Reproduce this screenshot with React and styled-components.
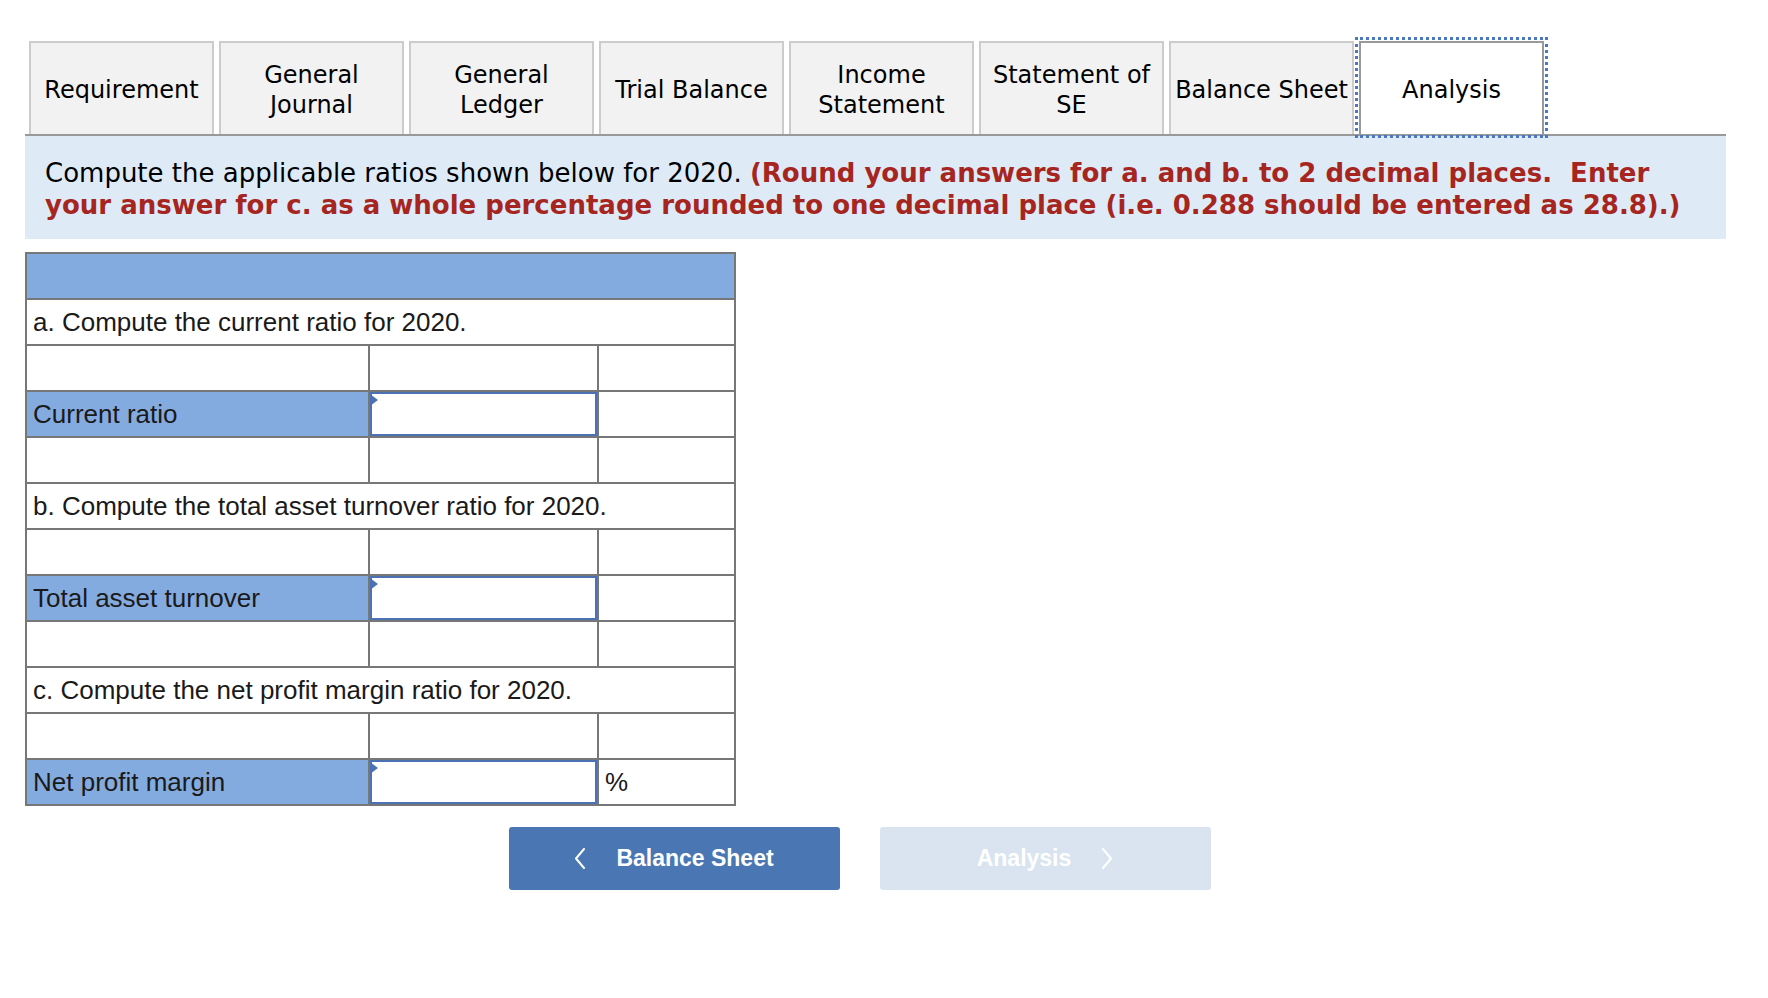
import React from "react";
import styled, { createGlobalStyle } from "styled-components";

const tabs = [
  "Requirement",
  "General\nJournal",
  "General\nLedger",
  "Trial Balance",
  "Income\nStatement",
  "Statement of\nSE",
  "Balance Sheet",
  "Analysis",
];

const sections = [
  { prompt: "a. Compute the current ratio for 2020.", label: "Current ratio", unit: "" },
  { prompt: "b. Compute the total asset turnover ratio for 2020.", label: "Total asset turnover", unit: "" },
  { prompt: "c. Compute the net profit margin ratio for 2020.", label: "Net profit margin", unit: "%" },
];

const Chevron = ({ dir }) => (
  <svg width="12" height="21" viewBox="0 0 12 21" fill="none">
    <polyline
      points={dir === "left" ? "10,1 2,10.5 10,20" : "2,1 10,10.5 2,20"}
      stroke="#fff"
      strokeWidth="2"
      strokeLinecap="round"
      strokeLinejoin="round"
    />
  </svg>
);

export default function App() {
  return (
    <>
      <GlobalStyle />
      <Page>
        <TabBar>
          {tabs.map((t) => (
            <Tab key={t} active={t === "Analysis"}>
              {t}
            </Tab>
          ))}
        </TabBar>
        <Banner>
          Compute the applicable ratios shown below for 2020.{" "}
          <Warn>
            (Round your answers for a. and b. to 2 decimal places.&nbsp; Enter your answer for c. as a
            whole percentage rounded to one decimal place (i.e. 0.288 should be entered as 28.8).)
          </Warn>
        </Banner>
        <Table>
          <colgroup>
            <col style={{ width: 343 }} />
            <col style={{ width: 229 }} />
            <col style={{ width: 137 }} />
          </colgroup>
          <tbody>
            <tr>
              <HeadCell colSpan={3} />
            </tr>
            {sections.map((s, i) => (
              <React.Fragment key={s.label}>
                <tr>
                  <Cell colSpan={3}>{s.prompt}</Cell>
                </tr>
                <tr>
                  <Cell />
                  <Cell />
                  <Cell />
                </tr>
                <tr>
                  <LabelCell>{s.label}</LabelCell>
                  <InputCell>
                    <InputWrap>
                      <Entry type="text" aria-label={s.label} />
                    </InputWrap>
                  </InputCell>
                  <Cell>{s.unit}</Cell>
                </tr>
                {i < sections.length - 1 && (
                  <tr>
                    <Cell />
                    <Cell />
                    <Cell />
                  </tr>
                )}
              </React.Fragment>
            ))}
          </tbody>
        </Table>
        <Nav>
          <NavButton>
            <Chevron dir="left" />
            Balance Sheet
          </NavButton>
          <NavButton disabled>
            Analysis
            <Chevron dir="right" />
          </NavButton>
        </Nav>
      </Page>
    </>
  );
}

const GlobalStyle = createGlobalStyle`
  body {
    margin: 0;
    background: #fff;
    font-family: "DejaVu Sans", Verdana, sans-serif;
  }
`;

const Page = styled.div`
  width: 1701px;
  padding: 41px 0 0 25px;
`;

const TabBar = styled.div`
  display: flex;
  gap: 5px;
  padding-left: 4px;
  border-bottom: 2px solid #999;
`;

const Tab = styled.div`
  box-sizing: border-box;
  width: 185px;
  height: 93px;
  padding-top: 3px;
  display: flex;
  align-items: center;
  justify-content: center;
  text-align: center;
  white-space: pre-line;
  font-size: 24px;
  line-height: 30px;
  color: #000;
  background: ${(p) => (p.active ? "#fff" : "#f2f2f2")};
  border: 2px solid ${(p) => (p.active ? "#999" : "#ccc")};
  border-bottom: none;
  outline: ${(p) => (p.active ? "3px dotted #4a78c2" : "none")};
  outline-offset: 1px;
`;

const Banner = styled.div`
  background: #deebf7;
  padding: 21px 36px 18px 20px;
  font-size: 26px;
  line-height: 32px;
  color: #000;
`;

const Warn = styled.b`
  color: #a6261f;
`;

const Table = styled.table`
  margin-top: 13px;
  width: 709px;
  border-collapse: collapse;
  table-layout: fixed;
  border: 2px solid #777;
  font-family: "Liberation Sans", Arial, sans-serif;
  font-size: 26px;
  color: #1a1a1a;
`;

const Cell = styled.td`
  height: 44px;
  padding: 0 6px;
  border: 2px solid #777;
  background: #fff;
  white-space: nowrap;
`;

const HeadCell = styled(Cell)`
  background: #84abdf;
`;

const LabelCell = styled(Cell)`
  background: #84abdf;
`;

const InputCell = styled(Cell)`
  padding: 0;
`;

const InputWrap = styled.div`
  position: relative;
  height: 44px;
  &::before {
    content: "";
    position: absolute;
    left: 0;
    top: 2px;
    border-top: 6px solid transparent;
    border-bottom: 6px solid transparent;
    border-left: 8px solid #4a72b4;
  }
`;

const Entry = styled.input`
  box-sizing: border-box;
  display: block;
  width: 100%;
  height: 100%;
  border: 2px solid #4a72b4;
  background: #fff;
  outline: none;
  font: inherit;
  padding: 0 8px;
`;

const Nav = styled.div`
  display: flex;
  justify-content: center;
  gap: 40px;
  margin-top: 21px;
  padding-right: 32px;
`;

const NavButton = styled.button`
  width: 331px;
  height: 63px;
  display: flex;
  align-items: center;
  justify-content: center;
  gap: 30px;
  border: none;
  border-radius: 3px;
  background: ${(p) => (p.disabled ? "#d9e4f0" : "#4a76b3")};
  color: #fff;
  font-family: "Liberation Sans", Arial, sans-serif;
  font-weight: 700;
  font-size: 23px;
`;
